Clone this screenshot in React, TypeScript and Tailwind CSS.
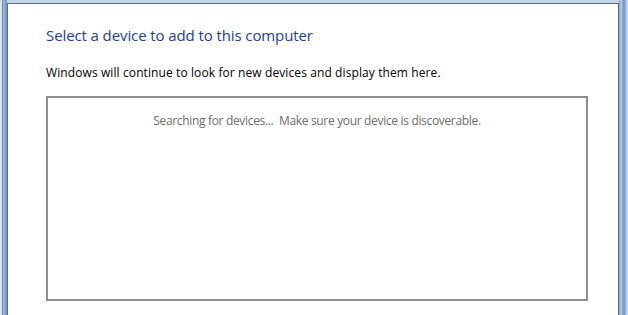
import React from 'react';

const font = { fontFamily: '"Open Sans", "Noto Sans", sans-serif' };

const App: React.FC = () => {
  return (
    <div className="w-[628px] h-[315px] flex overflow-hidden bg-[#c5d6ea]" style={font}>
      {/* Left window frame */}
      <div className="w-[7px] h-full bg-[linear-gradient(to_right,#d9e4f1_0,#d9e4f1_2px,#5f7fb3_2px,#a9c1e2_4px,#6b8cc0_6px,#8aa5cf_7px)]" />

      <div className="flex-1 flex flex-col">
        {/* Top frame strip */}
        <div className="h-[3px] bg-[#c4d4e8]" />

        {/* Client area */}
        <div className="flex-1 bg-white border-l border-t border-r border-[#5c6b80] pl-[38px] pr-[30px]">
          <h1 className="mt-[21px] text-[15px] leading-[21px] text-[#1f3c97] tracking-[-0.1px]">
            Select a device to add to this computer
          </h1>
          <p className="mt-[19px] text-[12px] leading-[16px] text-black tracking-[0.1px]">
            Windows will continue to look for new devices and display them here.
          </p>
          <div className="mt-[15px] h-[205px] border-2 border-[#8f8f8f] flex justify-center">
            <span className="mt-[15px] text-[12px] leading-[16px] text-[#6d6d6d] tracking-[-0.33px] whitespace-pre">
              Searching for devices...  Make sure your device is discoverable.
            </span>
          </div>
        </div>
      </div>

      {/* Right window frame */}
      <div className="w-[9px] h-full bg-[linear-gradient(to_right,#7f9cc8_0,#b9cde6_2px,#6d8dc0_5px,#a7bfdf_7px,#dbe5f2_9px)]" />
    </div>
  );
};

export default App;
